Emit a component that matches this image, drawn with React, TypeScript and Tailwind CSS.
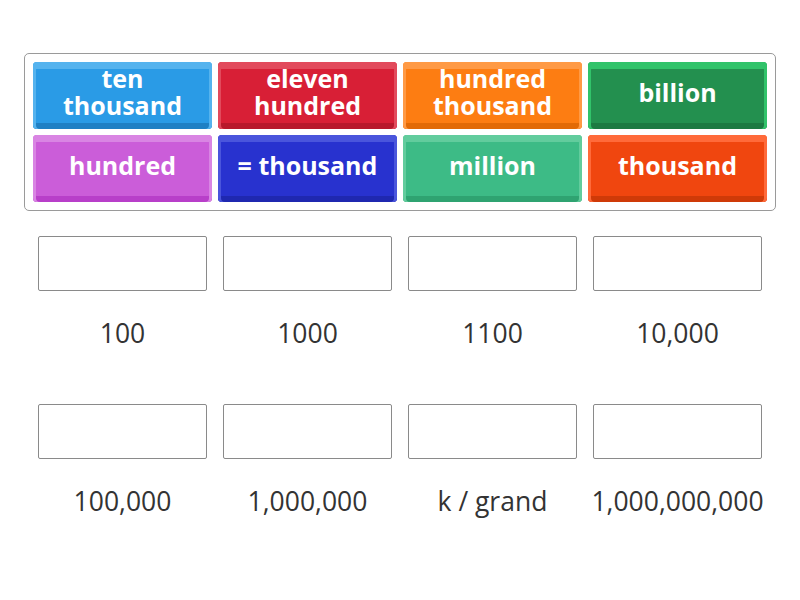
import React from 'react';

type Tile = { text: React.ReactNode; face: string };

const TILES: Tile[] = [
  { text: <>ten<br />thousand</>, face: 'bg-[#2a9be6] shadow-[inset_0_7px_0_#55b3ee,inset_3px_0_0_#55b3ee,inset_-3px_0_0_#55b3ee,inset_0_-6px_0_#1f80c4]' },
  { text: <>eleven<br />hundred</>, face: 'bg-[#d81f36] shadow-[inset_0_7px_0_#e24a5c,inset_3px_0_0_#e24a5c,inset_-3px_0_0_#e24a5c,inset_0_-6px_0_#b8182c]' },
  { text: <>hundred<br />thousand</>, face: 'bg-[#fd7d12] shadow-[inset_0_7px_0_#ff9a45,inset_3px_0_0_#ff9a45,inset_-3px_0_0_#ff9a45,inset_0_-6px_0_#e26a06]' },
  { text: 'billion', face: 'bg-[#23904f] shadow-[inset_0_7px_0_#31c36a,inset_3px_0_0_#31c36a,inset_-3px_0_0_#31c36a,inset_0_-6px_0_#1c7a42]' },
  { text: 'hundred', face: 'bg-[#cb5dd9] shadow-[inset_0_7px_0_#d985e3,inset_3px_0_0_#d985e3,inset_-3px_0_0_#d985e3,inset_0_-6px_0_#b83fc9]' },
  { text: '= thousand', face: 'bg-[#2832cf] shadow-[inset_0_7px_0_#4a55dc,inset_3px_0_0_#4a55dc,inset_-3px_0_0_#4a55dc,inset_0_-6px_0_#1f28b0]' },
  { text: 'million', face: 'bg-[#3dbb86] shadow-[inset_0_7px_0_#62cc9d,inset_3px_0_0_#62cc9d,inset_-3px_0_0_#62cc9d,inset_0_-6px_0_#2fa371]' },
  { text: 'thousand', face: 'bg-[#f0460f] shadow-[inset_0_7px_0_#ff6a3a,inset_3px_0_0_#ff6a3a,inset_-3px_0_0_#ff6a3a,inset_0_-6px_0_#cf3a08]' },
];

const LABELS = ['100', '1000', '1100', '10,000', '100,000', '1,000,000', 'k / grand', '1,000,000,000'];

function App() {
  return (
    <div className="min-h-screen bg-white px-6 pt-[53px] font-['Open_Sans',sans-serif]">
      <div className="rounded-[5px] border border-[#9a9a9a] p-2">
        <div className="grid grid-cols-4 gap-[6px]">
          {TILES.map((t, i) => (
            <div
              key={i}
              className={`flex h-[67px] items-center justify-center rounded-[4px] pb-[7px] text-center text-[25px] font-bold leading-[27px] text-white ${t.face}`}
            >
              <span>{t.text}</span>
            </div>
          ))}
        </div>
      </div>

      <div className="mt-[25px] grid grid-cols-4 gap-x-[6px] gap-y-[27px] px-[9px]">
        {LABELS.map((label) => (
          <div key={label} className="px-[5px]">
            <div className="h-[55px] rounded-[2px] border border-[#8a8a8a] bg-white" />
            <div className="flex h-[86px] items-center justify-center text-[26.5px] text-[#333333]">
              {label}
            </div>
          </div>
        ))}
      </div>
    </div>
  );
}

export default App;
